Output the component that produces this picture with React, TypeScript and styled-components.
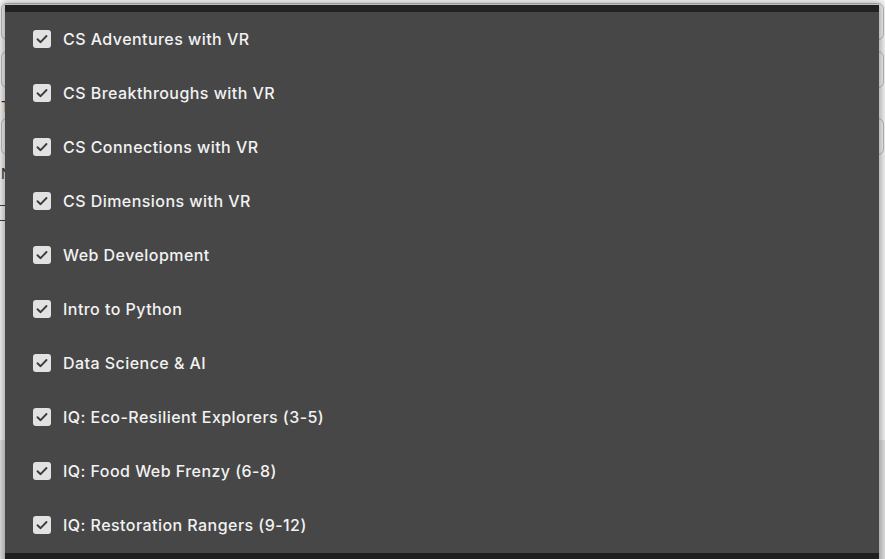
import React from 'react'
import styled, { createGlobalStyle } from 'styled-components'

const GlobalStyle = createGlobalStyle`
  html, body {
    margin: 0;
    padding: 0;
    width: 885px;
    height: 559px;
    overflow: hidden;
    background: #ffffff;
  }
`

const courses = [
  'CS Adventures with VR',
  'CS Breakthroughs with VR',
  'CS Connections with VR',
  'CS Dimensions with VR',
  'Web Development',
  'Intro to Python',
  'Data Science & AI',
  'IQ: Eco-Resilient Explorers (3-5)',
  'IQ: Food Web Frenzy (6-8)',
  'IQ: Restoration Rangers (9-12)',
]

/* BACKGROUND FORM */
const Page = styled.div`
  position: relative;
  width: 885px;
  height: 559px;
  overflow: hidden;
  font-family: 'Inter', 'Liberation Sans', sans-serif;
`

const Form = styled.div`
  display: flex;
  flex-direction: column;
  height: 100%;
`

const FormBody = styled.div`
  display: flex;
  flex-direction: column;
  padding: 3px 1px 0 1px;
  height: 437px;
  background: #ffffff;
`

const Input = styled.div<{ gap: number }>`
  height: 35px;
  border: 1px solid #c4c4c4;
  border-radius: 6px;
  margin-bottom: ${({ gap }) => gap}px;
`

const Label = styled.div`
  height: 20px;
  padding-left: 0;
  font-size: 14px;
  color: #333333;
`

const Tick = styled.div`
  width: 14px;
  height: 14px;
  margin: 20px 0 0 -5px;
  border: 1.5px solid #444444;
  border-radius: 2px;
`

const FormFooter = styled.div`
  flex: 1;
  background: #ececec;
`

/* DROPDOWN */
const Menu = styled.div`
  position: absolute;
  left: 5px;
  top: 5px;
  width: 874px;
  height: 560px;
  background: #474747;
  display: flex;
  flex-direction: column;
  box-shadow: 0 0 8px 3px rgba(0, 0, 0, 0.35);
`

const MenuTop = styled.div`
  height: 7px;
  background: #222222;
`

const List = styled.div`
  display: flex;
  flex-direction: column;
`

const Option = styled.div`
  display: flex;
  align-items: center;
  height: 54px;
  padding-left: 28px;
  gap: 12px;
`

const Box = styled.div`
  width: 18px;
  height: 18px;
  border-radius: 3px;
  background: #e2e2e2;
  display: flex;
  align-items: center;
  justify-content: center;
`

const OptionText = styled.span`
  font-family: 'Inter', 'Liberation Sans', sans-serif;
  font-size: 16px;
  font-weight: 500;
  color: #f2f2f2;
  letter-spacing: 0.45px;
`

const MenuBottom = styled.div`
  height: 10px;
  background: #1f1f1f;
  margin-top: 1px;
`

const Check = () => (
  <svg width="14" height="14" viewBox="0 0 14 14">
    <path d="M2.5 7.2 L5.6 10.2 L11.5 4" fill="none" stroke="#3c3c3c" strokeWidth="1.9" strokeLinecap="round" strokeLinejoin="round" />
  </svg>
)

const App: React.FC = () => {
  return (
    <Page>
      <GlobalStyle />
      <Form>
        <FormBody>
          <Input gap={11} />
          <Input gap={10} />
          <Label>T</Label>
          <Input gap={10} />
          <Label>N</Label>
          <Tick />
        </FormBody>
        <FormFooter />
      </Form>
      <Menu>
        <MenuTop />
        <List>
          {courses.map((c) => (
            <Option key={c}>
              <Box>
                <Check />
              </Box>
              <OptionText>{c}</OptionText>
            </Option>
          ))}
        </List>
        <MenuBottom />
      </Menu>
    </Page>
  )
}

export default App
